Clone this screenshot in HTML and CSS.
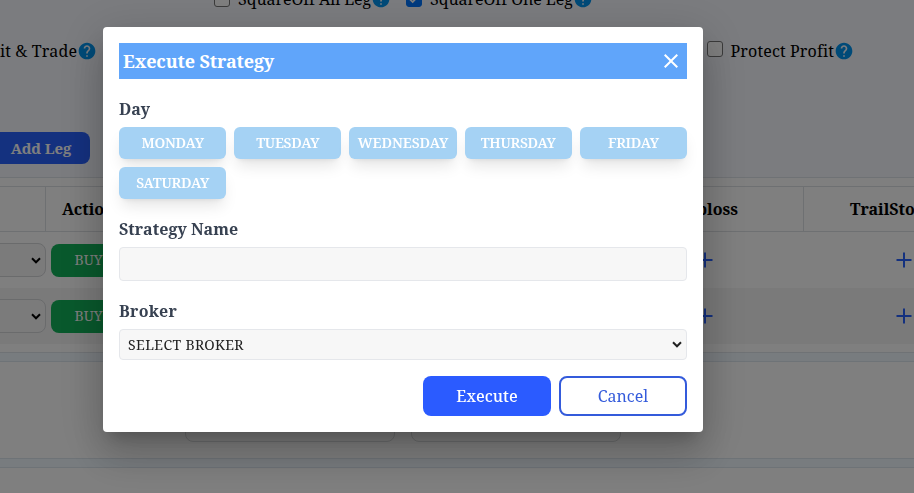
FILE: index.html
```html
<!DOCTYPE html>
<html lang="en">
<head>
<meta charset="utf-8">
<title>Execute Strategy</title>
<link rel="stylesheet" href="styles.css">
</head>
<body>
<svg class="defs" aria-hidden="true">
  <symbol id="help" viewBox="0 0 24 24"><path fill="currentColor" d="M12 2C6.48 2 2 6.48 2 12s4.48 10 10 10 10-4.48 10-10S17.52 2 12 2zm1 17h-2v-2h2v2zm2.07-7.75-.9.92C13.45 12.9 13 13.5 13 15h-2v-.5c0-1.1.45-2.1 1.17-2.83l1.24-1.26c.37-.36.59-.86.59-1.41 0-1.1-.9-2-2-2s-2 .9-2 2H8c0-2.210 1.790-4 4-4s4 1.790 4 4c0 .88-.36 1.680-.93 2.250z"/></symbol>
  <symbol id="plus" viewBox="0 0 16 16"><path d="M8 .5v15M.5 8h15" stroke="currentColor" stroke-width="2"/></symbol>
  <symbol id="chevron" viewBox="0 0 10 7"><path d="M1 1.300l4 4 4-4" fill="none" stroke="currentColor" stroke-width="2"/></symbol>
</svg>

<main class="page">
  <section class="settings">
    <div class="line line-square">
      <label class="option"><span class="box"></span><span class="t-square">SquareOff All Leg</span><svg class="help"><use href="#help"/></svg></label>
      <label class="option"><span class="box checked"><svg viewBox="0 0 16 16"><path d="M3 8l3.500 3.500L13 4.500" fill="none" stroke="#fff" stroke-width="2"/></svg></span><span class="t-square">SquareOff One Leg</span><svg class="help"><use href="#help"/></svg></label>
    </div>
    <div class="line line-profit">
      <div class="option"><span class="t-exit">it &amp; Trade</span><svg class="help"><use href="#help"/></svg></div>
      <label class="option"><span class="box box-protect"></span><span class="t-protect">Protect Profit</span><svg class="help"><use href="#help"/></svg></label>
    </div>
    <button class="add-leg">Add Leg</button>
  </section>
  <section class="legs">
    <div class="row head"><div></div><div class="action-head">Action</div><div></div><div>Stoploss</div><div>TrailStoploss</div></div>
    <div class="row"><div class="pick"><svg><use href="#chevron"/></svg></div><div class="buy-cell"><button class="buy">BUY</button></div><div></div><div><svg class="plus"><use href="#plus"/></svg></div><div><svg class="plus"><use href="#plus"/></svg></div></div>
    <div class="row alt"><div class="pick"><svg><use href="#chevron"/></svg></div><div class="buy-cell"><button class="buy">BUY</button></div><div></div><div><svg class="plus"><use href="#plus"/></svg></div><div><svg class="plus"><use href="#plus"/></svg></div></div>
  </section>
  <section class="fields"><div class="field"></div><div class="field"></div></section>
  <section class="rest"></section>
</main>

<div class="backdrop">
  <div class="dialog" role="dialog">
    <header class="dialog-head"><h2>Execute Strategy</h2><svg class="close" viewBox="0 0 24 24"><path fill="currentColor" d="M19 6.410L17.590 5 12 10.590 6.410 5 5 6.410 10.590 12 5 17.590 6.410 19 12 13.410 17.590 19 19 17.590 13.410 12z"/></svg></header>
    <div class="label label-day">Day</div>
    <div class="days">
      <button>MONDAY</button><button>TUESDAY</button><button class="wide">WEDNESDAY</button><button>THURSDAY</button><button>FRIDAY</button><button>SATURDAY</button>
    </div>
    <div class="label label-name">Strategy Name</div>
    <div class="input"></div>
    <div class="label label-broker">Broker</div>
    <div class="select"><span>SELECT BROKER</span><svg><use href="#chevron"/></svg></div>
    <footer class="actions"><button class="execute"><span>Execute</span></button><button class="cancel"><span>Cancel</span></button></footer>
  </div>
</div>
</body>
</html>
```
FILE: styles.css
```css
* { box-sizing: border-box; }
body {
  margin: 0;
  height: 493px;
  overflow: hidden;
  color: #000;
  font: 16px/24px "Noto Serif", "Droid Serif", "DejaVu Serif Condensed", "DejaVu Serif", serif;
  font-stretch: condensed;
}
button { font: inherit; border: 0; padding: 0; }
.defs { display: none; }
.page { height: 493px; overflow: hidden; background: #f1f8ff; }

.settings { height: 177px; background: #f6f9ff; overflow: hidden; }
.line { display: flex; white-space: nowrap; }
.option { display: flex; align-items: center; }
.box { width: 16px; height: 16px; border: 1px solid #767676; border-radius: 3px; background: #fff; margin-right: 8px; flex: none; }
.box.checked { background: #0075ff; border-color: #0075ff; }
.box-protect { position: relative; top: -2px; }
.box svg { display: block; width: 14px; height: 14px; }
.help { width: 20px; height: 20px; color: #0095f0; flex: none; }
.t-square { letter-spacing: -.06px; }
.t-exit { letter-spacing: .18px; }
.t-protect { letter-spacing: .15px; }
.line-square { height: 24px; margin: -13px 0 0 214px; gap: 15px; }
.line-profit { margin-top: 28px; justify-content: space-between; width: 854px; }
.add-leg { display: block; width: 98px; height: 32px; margin: 69px 0 0 -8px; border-radius: 8px; background: #2962ff; color: #fff; font-size: 15px; font-weight: 700; letter-spacing: -.1px; }

.legs { height: 176px; padding-top: 8px; background: #fff; border: solid #dfe4ea; border-width: 1px 0; overflow: hidden; }
.row { display: grid; grid-template-columns: 46px 101px 459px 198px 199px; width: 1003px; height: 56px; align-items: center; text-align: center; }
.row.alt { background: #f5f5f5; }
.row.head { height: 46px; border: solid #dde0e4; border-width: 1px 0; font-weight: 700; }
.row.head > div { height: 44px; line-height: 44px; border-right: 1px solid #dde0e4; }
.row.head > .action-head { border: 0; padding-left: 16px; text-align: left; }
.row.head > div:nth-child(3) { border: 0; }
.pick { display: flex; align-items: center; justify-content: flex-end; height: 34px; margin-left: -20px; padding-right: 4px; border: 1px solid #d4d6d9; border-radius: 8px; background: #f7f7f7; }
.pick svg, .select svg { width: 10px; height: 7px; }
.buy-cell { padding-left: 4.5px; }
.buy { display: block; width: 76px; height: 33px; border-radius: 8px; background: #12b35a; color: #fff; font-size: 14px; }
.plus { display: block; width: 16px; height: 16px; margin: 0 auto; color: #2962ff; }

.fields { display: flex; align-items: flex-end; gap: 16px; height: 98px; margin-top: 8px; padding: 0 0 16px 185px; background: #fff; border: solid #dde6ef; border-width: 1px 0; }
.field { width: 210px; height: 40px; border: 1px solid #d9dbdd; border-radius: 8px; background: #fdfdfd; }
.rest { height: 40px; margin-top: 8px; background: #fff; border-top: 1px solid #dde6ef; }

.backdrop { position: fixed; inset: 0; padding: 27px 0 0 103px; background: rgba(0, 0, 0, .5); }
.dialog {
  width: 600px; height: 405px; padding: 16px; background: #fff; border-radius: 4px;
  box-shadow: 0 11px 15px -7px rgba(0,0,0,.2), 0 24px 38px 3px rgba(0,0,0,.14), 0 9px 46px 8px rgba(0,0,0,.12);
}
.dialog-head { display: flex; align-items: center; justify-content: space-between; height: 36px; padding: 0 4px; background: #60a5fa; color: #fff; }
.dialog-head h2 { margin: 0; font-size: 18px; line-height: 28px; font-weight: 700; letter-spacing: -.12px; }
.close { width: 24px; height: 24px; }
.label { height: 24px; color: #374151; font-weight: 700; white-space: nowrap; letter-spacing: .06px; }
.label-day { margin-top: 18px; }
.days { display: grid; grid-template-columns: repeat(5, minmax(0, 1fr)); gap: 8px; margin-top: 6px; }
.days button { height: 32px; border-radius: 6px; background: #a5d2f4; color: #fff; font-size: 14px; font-weight: 600; letter-spacing: -.25px; box-shadow: 0 10px 15px -3px rgba(0,0,0,.1), 0 4px 6px -4px rgba(0,0,0,.1); }
.days .wide { letter-spacing: -.05px; }
.label-name { margin-top: 18px; }
.input { height: 34px; margin-top: 6px; border: 1px solid #e5e7eb; border-radius: 4px; background: #f7f7f7; }
.label-broker { margin-top: 18px; letter-spacing: .3px; }
.select { display: flex; align-items: center; justify-content: space-between; height: 31px; margin-top: 6px; padding: 0 4px 0 8px; border: 1px solid #e5e7eb; border-radius: 4px; background: #f7f7f7; color: #212121; font-size: 14px; letter-spacing: .4px; }
.actions { display: flex; justify-content: flex-end; gap: 8px; margin-top: 16px; }
.actions button { width: 128px; height: 40px; border-radius: 8px; }
.execute { background: #2b5bff; color: #fff; font-weight: 500; }
.cancel { background: #fff; border: 2px solid #345bdb; color: #345bdb; }
```
